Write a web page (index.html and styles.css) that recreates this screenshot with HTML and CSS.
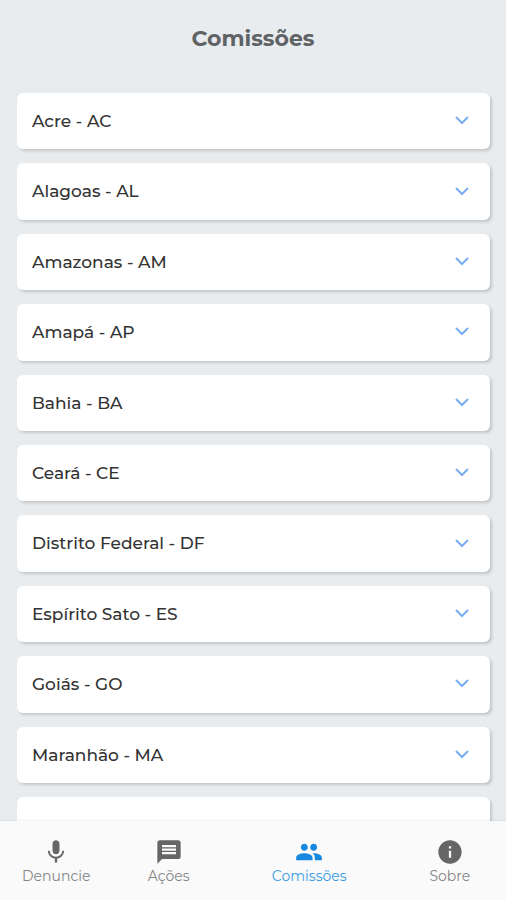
FILE: index.html
```
<!DOCTYPE html>
<html lang="pt-BR">
<head>
    <meta charset="UTF-8">
    <meta name="viewport" content="width=device-width, initial-scale=1.0">
    <title>Comissões</title>
    <link rel="stylesheet" href="styles.css">
</head>
<body>
    <header class="header">
        <h1>Comissões</h1>
    </header>

    <main class="content">
        <ul class="states">
            <li><button class="state" type="button">Acre - AC <svg class="chevron" viewBox="0 0 14 10"><path d="M1 1l6 6 6-6"/></svg></button></li>
            <li><button class="state" type="button">Alagoas - AL <svg class="chevron" viewBox="0 0 14 10"><path d="M1 1l6 6 6-6"/></svg></button></li>
            <li><button class="state" type="button">Amazonas - AM <svg class="chevron" viewBox="0 0 14 10"><path d="M1 1l6 6 6-6"/></svg></button></li>
            <li><button class="state" type="button">Amapá - AP <svg class="chevron" viewBox="0 0 14 10"><path d="M1 1l6 6 6-6"/></svg></button></li>
            <li><button class="state" type="button">Bahia - BA <svg class="chevron" viewBox="0 0 14 10"><path d="M1 1l6 6 6-6"/></svg></button></li>
            <li><button class="state" type="button">Ceará - CE <svg class="chevron" viewBox="0 0 14 10"><path d="M1 1l6 6 6-6"/></svg></button></li>
            <li><button class="state" type="button">Distrito Federal - DF <svg class="chevron" viewBox="0 0 14 10"><path d="M1 1l6 6 6-6"/></svg></button></li>
            <li><button class="state" type="button">Espírito Sato - ES <svg class="chevron" viewBox="0 0 14 10"><path d="M1 1l6 6 6-6"/></svg></button></li>
            <li><button class="state" type="button">Goiás - GO <svg class="chevron" viewBox="0 0 14 10"><path d="M1 1l6 6 6-6"/></svg></button></li>
            <li><button class="state" type="button">Maranhão - MA <svg class="chevron" viewBox="0 0 14 10"><path d="M1 1l6 6 6-6"/></svg></button></li>
            <li class="state loading"></li>
        </ul>
    </main>

    <nav class="tabs">
        <a class="tab" href="#denuncie">
            <svg viewBox="0 0 24 24"><path d="M12 14c1.66 0 2.99-1.34 2.99-3L15 5c0-1.66-1.34-3-3-3S9 3.34 9 5v6c0 1.66 1.34 3 3 3zm5.3-3c0 3-2.54 5.1-5.3 5.1S6.7 14 6.7 11H5c0 3.41 2.72 6.23 6 6.72V21h2v-3.28c3.28-.48 6-3.3 6-6.72h-1.7z"/></svg>
            Denuncie
        </a>
        <a class="tab" href="#acoes">
            <svg viewBox="0 0 24 24"><path d="M20 2H4c-1.1 0-1.99.9-1.99 2L2 22l4-4h14c1.1 0 2-.9 2-2V4c0-1.1-.9-2-2-2zM6 9h12v2H6V9zm12 5H6v-2h12v2zm0-6H6V6h12v2z"/></svg>
            Ações
        </a>
        <a class="tab active" href="#comissoes" aria-current="page">
            <svg viewBox="0 0 24 24"><path d="M16 11c1.66 0 2.99-1.34 2.99-3S17.66 5 16 5s-3 1.34-3 3 1.34 3 3 3zm-8 0c1.66 0 2.99-1.34 2.99-3S9.66 5 8 5 5 6.34 5 8s1.34 3 3 3zm0 2c-2.33 0-7 1.17-7 3.5V19h14v-2.5c0-2.33-4.67-3.5-7-3.5zm8 0c-.29 0-.62.02-.97.05C16.19 13.89 17 15.02 17 16.5V19h6v-2.5c0-2.33-4.67-3.5-7-3.5z"/></svg>
            Comissões
        </a>
        <a class="tab" href="#sobre">
            <svg viewBox="0 0 24 24"><path d="M12 2C6.48 2 2 6.48 2 12s4.48 10 10 10 10-4.48 10-10S17.52 2 12 2zm1 15h-2v-6h2v6zm0-8h-2V7h2v2z"/></svg>
            Sobre
        </a>
    </nav>
</body>
</html>
```
FILE: styles.css
```
* {
    box-sizing: border-box;
}

body {
    margin: 0;
    height: 100vh;
    display: flex;
    flex-direction: column;
    font-family: Montserrat, Inter, sans-serif;
    background: #e8ecef;
    color: #333;
}

.header {
    padding: 24px 16px;
    text-align: center;
}

.header h1 {
    margin: 0;
    font-size: 22px;
    line-height: 30px;
    font-weight: 700;
    color: #5f6366;
}

.content {
    flex: 1;
    min-height: 0;
    overflow-y: auto;
    scrollbar-width: none;
}

.states {
    list-style: none;
    margin: 0;
    padding: 15px 16px 16px 17px;
    display: grid;
    gap: 14px;
}

.state {
    width: 100%;
    display: flex;
    align-items: center;
    justify-content: space-between;
    padding: 18px 21px 18px 15px;
    border: none;
    border-radius: 6px;
    background: white;
    box-shadow: 2px 2px 3px rgba(0, 0, 0, 0.16);
    color: inherit;
    font-family: inherit;
    font-size: 17px;
    font-weight: 500;
    line-height: 1.2;
    text-align: left;
    cursor: pointer;
}

.state.loading {
    min-height: 56px;
}

.chevron {
    width: 14px;
    height: 10px;
    fill: none;
    stroke: #78adf5;
    stroke-width: 2;
}

.tabs {
    display: flex;
    background: #fafafa;
    box-shadow: 0 -1px 2px rgba(0, 0, 0, 0.06);
}

.tab {
    flex: 2;
    display: flex;
    flex-direction: column;
    align-items: center;
    padding: 17px 0 14px;
    color: #858585;
    font-size: 14px;
    line-height: 20px;
    text-decoration: none;
}

.tab svg {
    width: 28px;
    height: 28px;
    fill: #666;
}

.tab.active {
    flex: 3;
    color: #399be6;
}

.tab.active svg {
    fill: #1788e0;
}
```
